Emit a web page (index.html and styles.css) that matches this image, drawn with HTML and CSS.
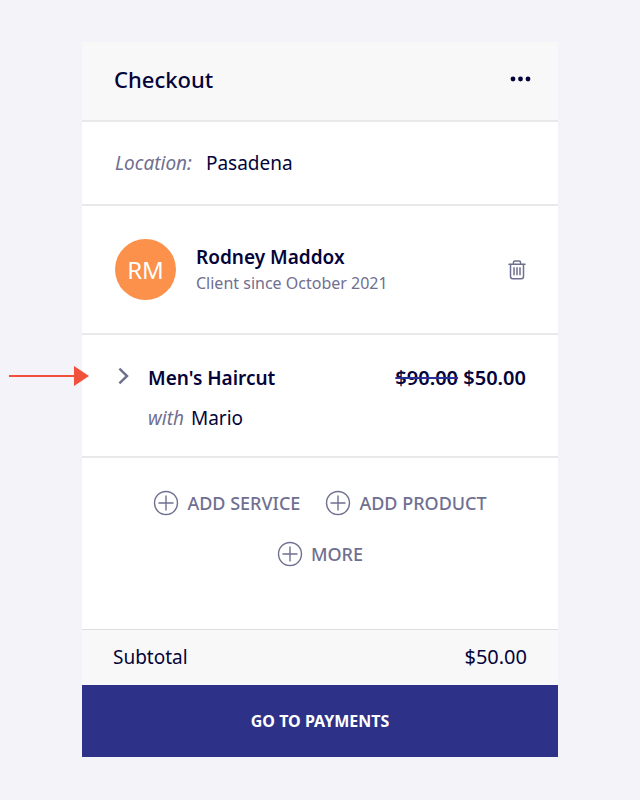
FILE: index.html
```html
<!DOCTYPE html>
<html lang="en">

<head>
  <meta charset="UTF-8" />
  <meta name="viewport" content="width=device-width, initial-scale=1.0" />
  <title>Checkout</title>
  <link rel="stylesheet" href="styles.css">
</head>

<body>
  <main class="checkout">
    <header class="checkout-header">
      <h1>Checkout</h1>
      <button class="icon-btn" type="button" aria-label="More options">
        <svg width="22" height="6" viewBox="0 0 22 6" fill="#04043a">
          <circle cx="3" cy="3" r="2.4" />
          <circle cx="10.5" cy="3" r="2.4" />
          <circle cx="18" cy="3" r="2.4" />
        </svg>
      </button>
    </header>

    <section class="location">
      <em>Location:</em>
      <span>Pasadena</span>
    </section>

    <section class="client">
      <div class="avatar">RM</div>
      <div class="client-info">
        <h2>Rodney Maddox</h2>
        <p>Client since October 2021</p>
      </div>
      <button class="icon-btn trash" type="button" aria-label="Remove client">
        <svg width="18" height="20" viewBox="0 0 18 20" fill="none" stroke="#6f6f91" stroke-width="1.5" stroke-linecap="round" stroke-linejoin="round">
          <path d="M1 4.2h16M5.4 4V2.7q0-1.6 1.6-1.6h4q1.6 0 1.6 1.6V4" />
          <path d="M2.5 4.4v12.2q0 2.2 2.2 2.2h8.6q2.2 0 2.2-2.2V4.4" />
          <path d="M6 7.8v7M9 7.8v7M12 7.8v7" />
        </svg>
      </button>
    </section>

    <section class="service">
      <!-- callout arrow pointing at the expand button -->
      <svg class="pointer" width="80" height="20" viewBox="0 0 80 20">
        <path d="M0 10h66" stroke="#f2503b" stroke-width="2" />
        <path d="M65 0l15 10-15 10z" fill="#f2503b" />
      </svg>
      <button class="icon-btn expand" type="button" aria-label="Expand service">
        <svg width="12" height="18" viewBox="0 0 12 18" fill="none" stroke="#6f6f91" stroke-width="2.5">
          <path d="M1.4 1.6L9 9l-7.6 7.4" />
        </svg>
      </button>
      <div class="service-info">
        <div class="service-line">
          <h2>Men's Haircut</h2>
          <p class="price"><del>$90.00</del> <span>$50.00</span></p>
        </div>
        <p class="staff"><em>with</em> <span>Mario</span></p>
      </div>
    </section>

    <section class="actions">
      <button class="add-btn" type="button">
        <svg width="26" height="26" viewBox="0 0 26 26" fill="none" stroke="#6f6f91" stroke-width="1.4">
          <circle cx="13" cy="13" r="11.5" />
          <path d="M13 5.5v15M5.5 13h15" />
        </svg>
        ADD SERVICE
      </button>
      <button class="add-btn" type="button">
        <svg width="26" height="26" viewBox="0 0 26 26" fill="none" stroke="#6f6f91" stroke-width="1.4">
          <circle cx="13" cy="13" r="11.5" />
          <path d="M13 5.5v15M5.5 13h15" />
        </svg>
        ADD PRODUCT
      </button>
      <button class="add-btn" type="button">
        <svg width="26" height="26" viewBox="0 0 26 26" fill="none" stroke="#6f6f91" stroke-width="1.4">
          <circle cx="13" cy="13" r="11.5" />
          <path d="M13 5.5v15M5.5 13h15" />
        </svg>
        MORE
      </button>
    </section>

    <section class="subtotal">
      <span>Subtotal</span>
      <span class="amount">$50.00</span>
    </section>

    <button class="pay-btn" type="button">GO TO PAYMENTS</button>
  </main>
</body>

</html>
```
FILE: styles.css
```css
* {
  margin: 0;
  padding: 0;
  box-sizing: border-box;
}

body {
  padding: 42px 82px;
  background-color: #f3f3f9;
  font-family: "Noto Sans", "Open Sans", sans-serif;
  font-size: 19px;
  line-height: 24px;
  color: #04043a;
}

button {
  border: 0;
  background: none;
  font-family: inherit;
  cursor: pointer;
}

svg {
  display: block;
}

h2 {
  font-size: 19px;
  font-weight: 600;
}

.checkout {
  background-color: #fff;
}

.checkout-header,
.location,
.client,
.service {
  display: flex;
  align-items: center;
  padding: 0 32px 0 33px;
  border-bottom: 2px solid #e9e9eb;
}

.checkout-header {
  justify-content: space-between;
  padding: 22px 26px 26px 32px;
  background-color: #f8f8f8;
}

.checkout-header h1 {
  font-size: 22px;
  font-weight: 500;
  line-height: 30px;
}

.location {
  gap: 14px;
  padding-top: 29px;
  padding-bottom: 29px;
}

em {
  color: #6f6f91;
}

.client {
  gap: 20px;
  padding-top: 33px;
  padding-bottom: 33px;
}

.avatar {
  width: 61px;
  height: 61px;
  border-radius: 50%;
  background-color: #fb914b;
  font-size: 24px;
  line-height: 61px;
  text-align: center;
  color: #fff;
}

.client-info {
  flex: 1;
}

.client-info p {
  margin-top: 2px;
  font-size: 16px;
  color: #6f6f91;
}

.service {
  position: relative;
  align-items: flex-start;
  gap: 18px;
  padding-top: 31px;
  padding-bottom: 26px;
}

.pointer {
  position: absolute;
  top: 31px;
  left: -73px;
}

.expand {
  padding: 1px 0 2px 3px;
}

.service-info {
  flex: 1;
}

.service-line {
  display: flex;
  justify-content: space-between;
}

.price {
  font-size: 20px;
  font-weight: 600;
}

.price del {
  text-decoration: line-through 2px #2a2f9a;
}

.staff {
  display: flex;
  gap: 7px;
  margin-top: 16px;
}

.actions {
  display: flex;
  flex-wrap: wrap;
  justify-content: center;
  gap: 25px;
  padding: 32px 32px 62px;
  border-bottom: 1px solid #dedee0;
}

.add-btn {
  display: flex;
  align-items: center;
  gap: 8px;
  font-size: 18px;
  font-weight: 500;
  line-height: 26px;
  color: #6f6f91;
}

.subtotal {
  display: flex;
  justify-content: space-between;
  padding: 15px 31px 16px;
  background-color: #f8f8f8;
}

.amount {
  font-size: 20px;
}

.pay-btn {
  display: block;
  width: 100%;
  padding: 24px;
  background-color: #2d3187;
  font-size: 16px;
  font-weight: 700;
  line-height: 24px;
  color: #fff;
}
```
